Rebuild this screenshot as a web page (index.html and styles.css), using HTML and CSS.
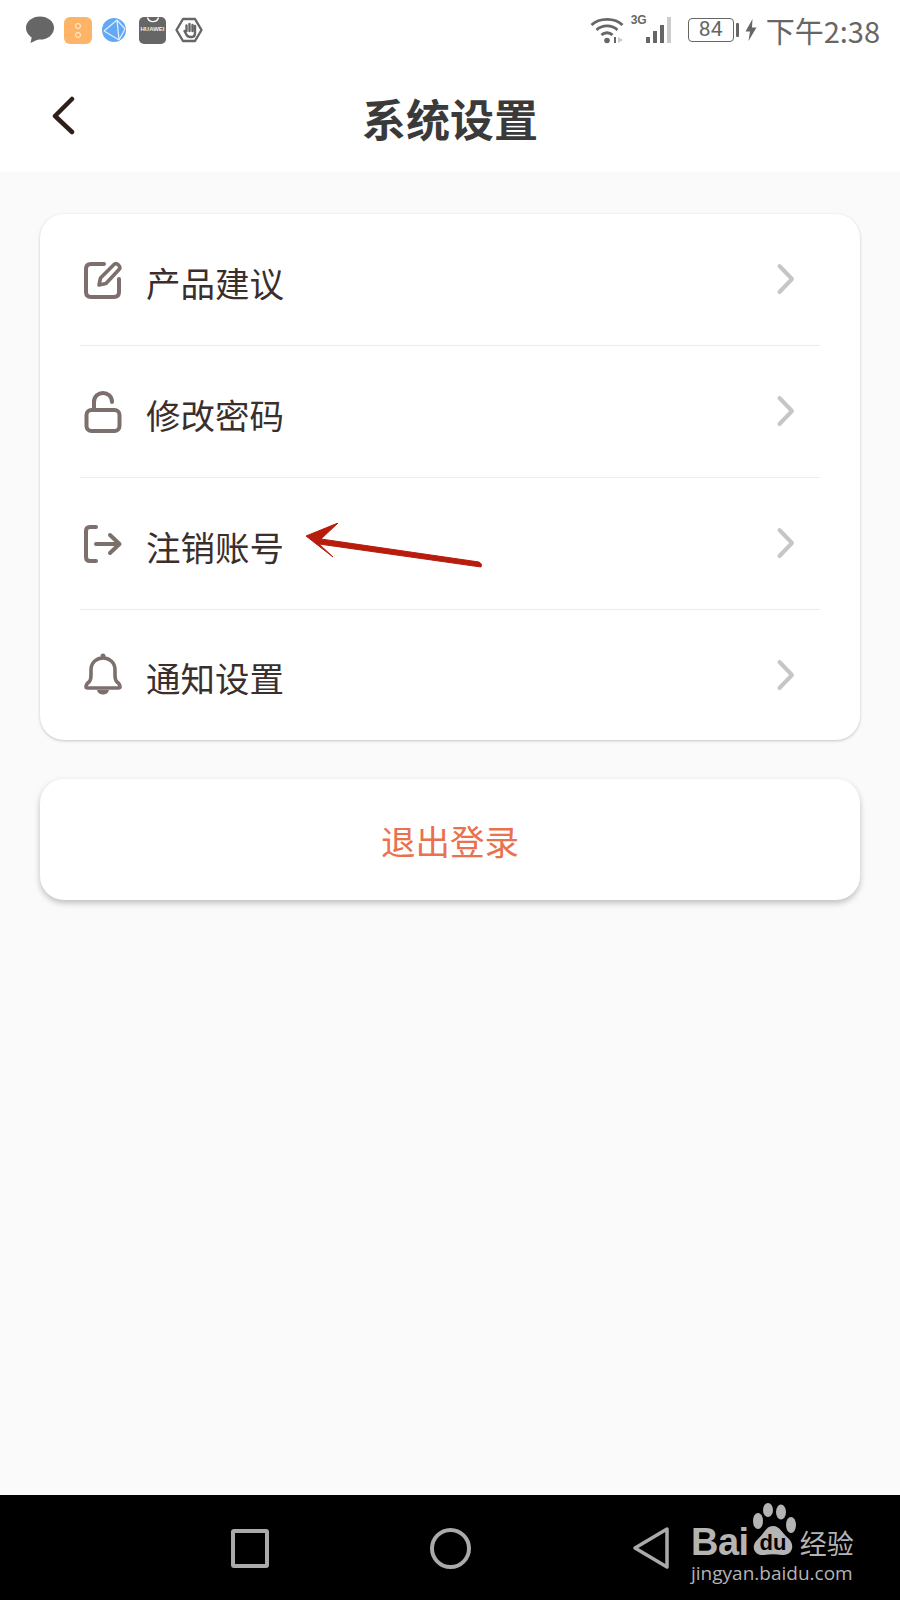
FILE: index.html
```html
<!DOCTYPE html>
<html lang="zh-CN">
<head>
    <meta charset="UTF-8">
    <meta name="viewport" content="width=device-width, initial-scale=1.0">
    <title>系统设置</title>
    <link rel="stylesheet" href="styles.css">
</head>
<body>

    <!-- Status bar -->
    <div class="status-bar">
        <div class="status-left">
            <svg class="st-icon" width="30" height="30" viewBox="0 0 30 30">
                <ellipse cx="15" cy="13" rx="14" ry="11.5" fill="#666"/>
                <path d="M7 21 L5.500 28 L14 24 Z" fill="#666"/>
            </svg>
            <div class="app-orange"><span></span><span></span></div>
            <svg class="st-icon" width="26" height="26" viewBox="0 0 26 26">
                <circle cx="13" cy="13" r="12" fill="#62a8f5"/>
                <path d="M3 14 L16 3 M3 14 L18 23 M16 3 L18 23 M16 3 L24 12 M18 23 L24 12" stroke="#dcecff" stroke-width="1.300" fill="none"/>
            </svg>
            <div class="app-huawei">
                <svg width="14" height="6" viewBox="0 0 14 6"><path d="M1.500 0.500 C3 6 11 6 12.500 0.500" stroke="#fff" stroke-width="1.300" fill="none"/></svg>
                <span>HUAWEI</span>
            </div>
            <svg class="st-icon" width="28" height="26" viewBox="0 0 28 26">
                <path d="M8 2 H20 L26.500 13 L20 24 H8 L1.500 13 Z" fill="#fff" stroke="#666" stroke-width="2.400" stroke-linejoin="round"/>
                <path d="M9.500 14 L12 18.500 C13 20 15 20 17 20 C19 20 20 18 20 16 V9 M11.500 14 V8.500 M14.500 14 V7 M17.500 14 V8" stroke="#666" stroke-width="2.400" stroke-linecap="round" fill="none"/>
            </svg>
        </div>
        <div class="status-right">
            <svg width="34" height="28" viewBox="0 0 34 28">
                <g fill="none" stroke="#666" stroke-width="2.800">
                    <path d="M1.500 9 C9 1.500 25 1.500 32.500 9"/>
                    <path d="M6.500 14 C12 8.500 22 8.500 27.500 14"/>
                    <path d="M11.500 19 C14.500 16 19.500 16 22.500 19"/>
                </g>
                <circle cx="17" cy="24.500" r="2.800" fill="#666"/>
                <path d="M24 21 V27 H26 V21 Z" fill="#666"/>
                <path d="M28 21 V27 L33 24 Z" fill="#ccc"/>
            </svg>
            <div class="signal">
                <span class="net-label">3G</span>
                <svg width="30" height="28" viewBox="0 0 30 28">
                    <rect x="0" y="21" width="4" height="6" fill="#666"/>
                    <rect x="7" y="15" width="4" height="12" fill="#666"/>
                    <rect x="14" y="9" width="4" height="18" fill="#666"/>
                    <rect x="21" y="1" width="4" height="26" fill="#ccc"/>
                </svg>
            </div>
            <div class="battery">84</div>
            <div class="battery-nub"></div>
            <svg width="12" height="22" viewBox="0 0 12 22"><path d="M7.500 0 L0.500 12.500 H5 L3.500 22 L11.500 8.500 H7 Z" fill="#666"/></svg>
            <span class="clock">下午2:38</span>
        </div>
    </div>

    <!-- Title bar -->
    <div class="title-bar">
        <svg class="back" width="26" height="40" viewBox="0 0 26 40">
            <path d="M22 3 L5 20 L22 36" fill="none" stroke="#2e1f1b" stroke-width="4.500" stroke-linecap="round" stroke-linejoin="round"/>
        </svg>
        <h1>系统设置</h1>
    </div>

    <div class="content">
        <div class="card menu">
            <div class="row">
                <svg class="row-icon" width="40" height="40" viewBox="0 0 40 40">
                    <path d="M21 4 H8 Q3 4 3 9 V32 Q3 37 8 37 H31 Q36 37 36 32 V19" fill="none" stroke="#7d6f6b" stroke-width="4" stroke-linecap="round"/>
                    <path d="M16 25 L17.500 18 L31 4.500 Q33 2.500 35.500 5 Q38 7.500 36 9.500 L23 23.500 Z" fill="none" stroke="#7d6f6b" stroke-width="3.600" stroke-linejoin="round"/>
                </svg>
                <span class="row-label">产品建议</span>
                <svg class="chevron" width="20" height="32" viewBox="0 0 20 32"><path d="M3.500 3 L16 16 L3.500 29" fill="none" stroke="#c6c6c6" stroke-width="4" stroke-linecap="round" stroke-linejoin="round"/></svg>
            </div>
            <div class="row">
                <svg class="row-icon" width="40" height="44" viewBox="0 0 40 44">
                    <rect x="3.500" y="20" width="33" height="21" rx="5" fill="none" stroke="#7d6f6b" stroke-width="4"/>
                    <path d="M11 19 V12 C11 0 29 0 29 12" fill="none" stroke="#7d6f6b" stroke-width="4" stroke-linecap="round"/>
                </svg>
                <span class="row-label">修改密码</span>
                <svg class="chevron" width="20" height="32" viewBox="0 0 20 32"><path d="M3.500 3 L16 16 L3.500 29" fill="none" stroke="#c6c6c6" stroke-width="4" stroke-linecap="round" stroke-linejoin="round"/></svg>
            </div>
            <div class="row">
                <svg class="row-icon" width="40" height="40" viewBox="0 0 40 40">
                    <path d="M13 3 H7 Q3 3 3 7 V33 Q3 37 7 37 H13" fill="none" stroke="#7d6f6b" stroke-width="4" stroke-linecap="round"/>
                    <path d="M13 20 H36 M27 11 L36.500 20 L27 29" fill="none" stroke="#7d6f6b" stroke-width="4" stroke-linecap="round" stroke-linejoin="round"/>
                </svg>
                <span class="row-label">注销账号</span>
                <svg class="chevron" width="20" height="32" viewBox="0 0 20 32"><path d="M3.500 3 L16 16 L3.500 29" fill="none" stroke="#c6c6c6" stroke-width="4" stroke-linecap="round" stroke-linejoin="round"/></svg>
                <svg class="arrow" width="180" height="50" viewBox="0 0 180 50">
                    <path d="M1 13 L33 0 L16 16 L174 39 Q178 41 176 44 L14 21 L28 34 Z" fill="#b81c0c" stroke="#b81c0c" stroke-width="1" stroke-linejoin="round"/>
                </svg>
            </div>
            <div class="row">
                <svg class="row-icon" width="40" height="44" viewBox="0 0 40 44">
                    <path d="M3 34 Q3 31 6 29 Q8 27 8 22 V17 C8 1 32 1 32 17 V22 Q32 27 34 29 Q37 31 37 34 Q37 35 35 35 H5 Q3 35 3 34 Z" fill="none" stroke="#7d6f6b" stroke-width="3.600" stroke-linejoin="round"/>
                    <path d="M14 37 C15 43 25 43 26 37 Z" fill="#7d6f6b"/>
                    <circle cx="20" cy="3" r="2.500" fill="#7d6f6b"/>
                </svg>
                <span class="row-label">通知设置</span>
                <svg class="chevron" width="20" height="32" viewBox="0 0 20 32"><path d="M3.500 3 L16 16 L3.500 29" fill="none" stroke="#c6c6c6" stroke-width="4" stroke-linecap="round" stroke-linejoin="round"/></svg>
            </div>
        </div>

        <div class="card logout">退出登录</div>
    </div>

    <!-- Android nav bar -->
    <div class="nav-bar">
        <div class="nav-square"></div>
        <div class="nav-circle"></div>
        <svg class="nav-back" width="38" height="44" viewBox="0 0 38 44">
            <path d="M35 3 L3 22 L35 41 Z" fill="none" stroke="#aaa" stroke-width="3.500" stroke-linejoin="round"/>
        </svg>

        <div class="watermark">
            <div class="wm-top">
                <span class="wm-bai">Bai</span>
                <svg class="wm-paw" width="50" height="56" viewBox="0 0 50 56">
                    <ellipse cx="10" cy="18" rx="5" ry="8" fill="#b4b4b4"/>
                    <ellipse cx="20" cy="7" rx="5" ry="7" fill="#b4b4b4"/>
                    <ellipse cx="33" cy="9" rx="5" ry="7.500" fill="#b4b4b4"/>
                    <ellipse cx="43" cy="22" rx="5" ry="8" fill="#b4b4b4"/>
                    <path d="M25 23 C32 23 34 30 40 35 C48 42 44 53 34 52 C28 51 22 51 16 52 C6 53 2 43 10 36 C16 31 18 23 25 23 Z" fill="#b4b4b4"/>
                    <text x="25" y="47" text-anchor="middle" class="wm-du">du</text>
                </svg>
                <span class="wm-cn">经验</span>
            </div>
            <div class="wm-url">jingyan.baidu.com</div>
        </div>
    </div>

</body>
</html>
```

FILE: styles.css
```css
body {
    margin: 0;
    width: 900px;
    height: 1600px;
    display: flex;
    flex-direction: column;
    background-color: #fafafa;
    font-family: "Noto Sans CJK SC", "Noto Sans", sans-serif;
    overflow: hidden;
}

/* status bar */
.status-bar {
    height: 64px;
    background-color: #fff;
    display: flex;
    justify-content: space-between;
    align-items: center;
    padding: 0 20px 4px 25px;
    box-sizing: border-box;
}

.status-left {
    display: flex;
    align-items: center;
    gap: 9px;
}

.app-orange {
    width: 28px;
    height: 27px;
    border-radius: 6px;
    background-color: #fdb466;
    display: flex;
    flex-direction: column;
    align-items: center;
    justify-content: center;
    gap: 3px;
}

.app-orange span {
    width: 4px;
    height: 4px;
    border-radius: 50%;
    border: 1px solid #fff3e0;
}

.app-huawei {
    width: 27px;
    height: 27px;
    border-radius: 5px;
    background-color: #666;
    display: flex;
    flex-direction: column;
    align-items: center;
    gap: 3px;
    margin-left: 3px;
}

.app-huawei span {
    font-family: "Liberation Sans", sans-serif;
    font-size: 6px;
    line-height: 7px;
    font-weight: bold;
    color: #eee;
}

.status-right {
    display: flex;
    align-items: center;
    color: #666;
}

.signal {
    position: relative;
    margin-left: 22px;
    margin-right: 12px;
}

.signal svg {
    display: block;
}

.net-label {
    position: absolute;
    left: -15px;
    top: -3px;
    font-family: "Liberation Sans", sans-serif;
    font-size: 12px;
    font-weight: bold;
    color: #666;
}

.battery {
    width: 46px;
    height: 24px;
    box-sizing: border-box;
    border: 1.5px solid #666;
    border-radius: 4px;
    font-family: Roboto, sans-serif;
    font-size: 21px;
    line-height: 21px;
    text-align: center;
}

.battery-nub {
    width: 3px;
    height: 14px;
    background-color: #666;
    margin: 0 6px 0 2px;
    border-radius: 1px;
}

.clock {
    font-size: 29px;
    line-height: 34px;
    margin-left: 9px;
}

/* title bar */
.title-bar {
    position: relative;
    height: 108px;
    background-color: #fff;
    display: flex;
    align-items: center;
    justify-content: center;
    padding-bottom: 0;
}

.title-bar h1 {
    margin: 0;
    font-size: 44px;
    font-weight: 700;
    color: #3a3a3a;
    line-height: 108px;
}

.back {
    position: absolute;
    left: 50px;
    top: 32px;
}

/* cards */
.content {
    flex: 1;
    padding: 42px 40px 0;
    display: flex;
    flex-direction: column;
    gap: 39px;
}

.card {
    background-color: #fff;
    border-radius: 24px;
    box-shadow: 0 1px 3px rgba(0, 0, 0, 0.22);
}

.menu {
    padding: 0 40px;
}

.row {
    position: relative;
    height: 131px;
    display: flex;
    align-items: center;
    padding-left: 3px;
    border-top: 1px solid #ececec;
}

.row:first-child {
    border-top: none;
}

.row:last-child {
    height: 130px;
}

.row-icon {
    width: 40px;
    flex-shrink: 0;
}

.row-label {
    margin-left: 23px;
    font-size: 34.500px;
    line-height: 50px;
    color: #3a2f2c;
    padding-top: 4px;
}

.chevron {
    position: absolute;
    right: 24px;
    top: 49px;
}

.arrow {
    position: absolute;
    left: 225px;
    top: 45px;
}

.logout {
    height: 121px;
    display: flex;
    align-items: center;
    justify-content: center;
    font-size: 34.500px;
    color: #e9714e;
    box-shadow: 0 3px 6px rgba(0, 0, 0, 0.24);
}

/* nav bar */
.nav-bar {
    position: relative;
    height: 105px;
    background-color: #000;
    display: flex;
    align-items: center;
}

.nav-square {
    width: 38px;
    height: 39px;
    box-sizing: border-box;
    border: 4px solid #aaa;
    border-radius: 3px;
    margin-left: 231px;
    margin-top: 1px;
}

.nav-circle {
    width: 41px;
    height: 41px;
    box-sizing: border-box;
    border: 4px solid #aaa;
    border-radius: 50%;
    margin-left: 161px;
    margin-top: 1px;
}

.nav-back {
    margin-left: 161px;
    margin-top: 1px;
}

.watermark {
    position: absolute;
    left: 691px;
    top: 8px;
    width: 162px;
    color: #b4b4b4;
}

.wm-top {
    display: flex;
    align-items: flex-end;
    height: 56px;
}

.wm-bai {
    font-family: "Liberation Sans", sans-serif;
    font-weight: bold;
    font-size: 38px;
    line-height: 34px;
    letter-spacing: -0.5px;
}

.wm-paw {
    margin-left: -1px;
    flex-shrink: 0;
}

.wm-du {
    font-family: "Liberation Sans", sans-serif;
    font-size: 22px;
    font-weight: bold;
    fill: #000;
}

.wm-cn {
    font-size: 27px;
    line-height: 32px;
    margin-left: 2px;
    white-space: nowrap;
}

.wm-url {
    font-family: "Open Sans", sans-serif;
    font-size: 19px;
    line-height: 22px;
    margin-top: 3px;
    white-space: nowrap;
}
```
